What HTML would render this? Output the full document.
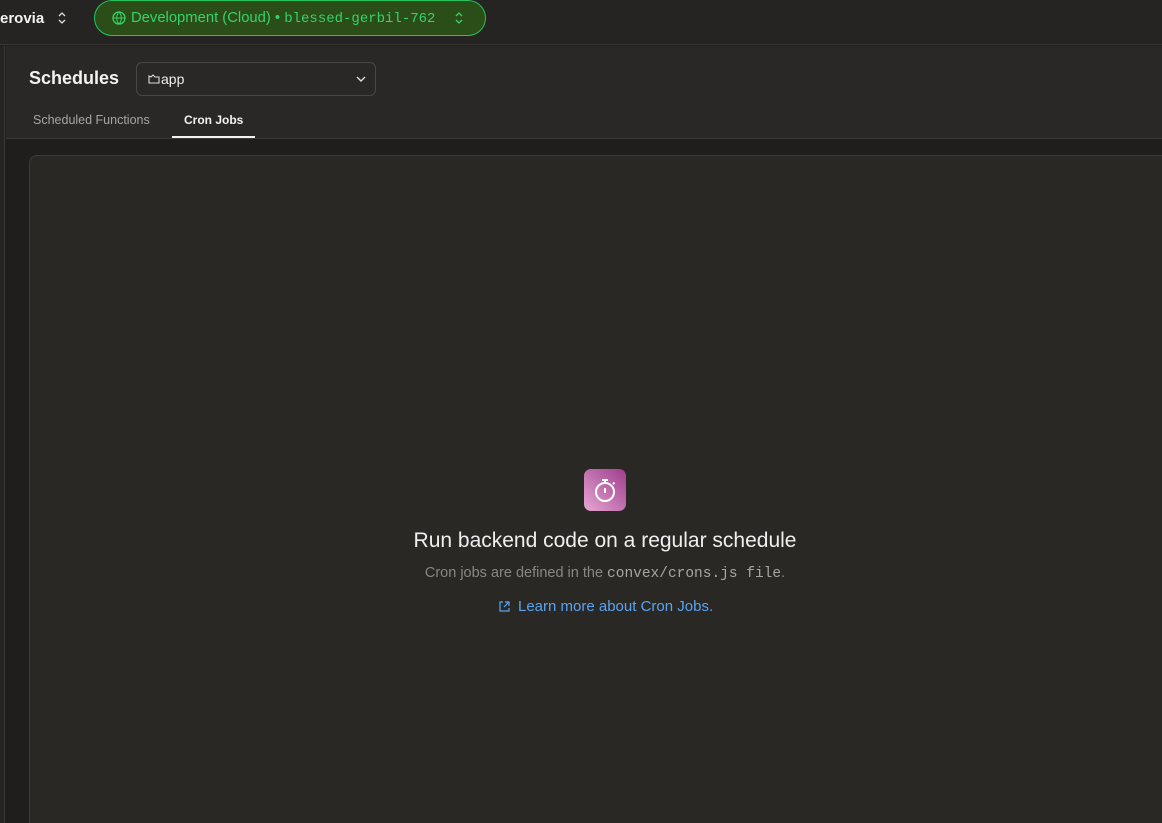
<!DOCTYPE html><html><head><style>
*{box-sizing:border-box;margin:0;padding:0}
html,body{width:1162px;height:823px;overflow:hidden}
body{background:#1f1e1c;font-family:"Liberation Sans",sans-serif;color:#eee;position:relative}
.top{position:absolute;left:0;top:0;width:1162px;height:45px;background:#252422;border-bottom:1px solid #3a3834}
.side{position:absolute;left:0;top:46px;width:5px;height:777px;background:#252422;border-right:1px solid #3a3834}
.head{position:absolute;left:6px;top:46px;right:0;height:93px;background:#2a2826;border-bottom:1px solid #3c3a36}
.card{position:absolute;left:29px;top:155px;width:1150px;height:700px;background:#2a2825;border:1px solid #3c3a36;border-radius:8px}
</style></head><body>
<div class="top">
<div style="position:absolute;left:0;top:10px;font-size:15px;font-weight:bold;color:#f2f2f2">erovia</div>
<svg style="position:absolute;left:57px;top:11px" width="10" height="14"><path d="M2 5l3-3 3 3M2 9l3 3 3-3" stroke="#ddd" stroke-width="1.3" fill="none"/></svg>
<div style="position:absolute;left:94px;top:0;width:392px;height:36px;border:1px solid #22c55e;border-radius:18px;background:#2b4d17;color:#35d46a;font-size:14.8px;line-height:34px;padding-left:36px;white-space:nowrap">Development (Cloud) • <span style="font-family:'Liberation Mono',monospace;font-size:14px">blessed-gerbil-762</span></div>
<svg style="position:absolute;left:112px;top:11px" width="14" height="14"><circle cx="7" cy="7" r="6" stroke="#35d46a" fill="none" stroke-width="1.3"/><path d="M1 7h12M7 1c-3 3-3 9 0 12M7 1c3 3 3 9 0 12" stroke="#35d46a" fill="none" stroke-width="1"/></svg>
<svg style="position:absolute;left:454px;top:11px" width="10" height="14"><path d="M2 5l3-3 3 3M2 9l3 3 3-3" stroke="#35d46a" stroke-width="1.3" fill="none"/></svg>
</div>
<div class="side"></div>
<div class="head">
<div style="position:absolute;left:23px;top:22px;font-size:18px;font-weight:bold;color:#f2f2f2">Schedules</div>
<div style="position:absolute;left:130px;top:16px;width:240px;height:34px;border:1px solid #4a4743;border-radius:6px;font-size:14px;line-height:32px;padding-left:24px;color:#eee">app</div>
<svg style="position:absolute;left:142px;top:27px" width="13" height="12"><path d="M1 3v7h10V4H7L5 2 3 4z" stroke="#ddd" fill="none" stroke-width="1.1"/></svg>
<svg style="position:absolute;left:349px;top:28px" width="12" height="10"><path d="M2 3l4 4 4-4" stroke="#ddd" stroke-width="1.4" fill="none"/></svg>
<div style="position:absolute;left:27px;top:67px;font-size:12.5px;color:#a8a5a0">Scheduled Functions</div>
<div style="position:absolute;left:178px;top:67px;font-size:12px;font-weight:bold;color:#f2f2f2">Cron Jobs</div>
<div style="position:absolute;left:166px;top:90px;width:83px;height:2px;background:#f2f2f2"></div>
</div>
<div class="card"></div>
<div style="position:absolute;left:584px;top:469px;width:42px;height:42px;border-radius:7px;background:linear-gradient(45deg,#e6a6d3,#9e3d8c)"></div>
<svg style="position:absolute;left:584px;top:469px" width="42" height="42"><circle cx="21" cy="23" r="9" stroke="#fff" stroke-width="2" fill="none"/><path d="M18 11h6M21 11v3M21 19v5M29 15l1.5-1.5" stroke="#fff" stroke-width="2" fill="none"/></svg>
<div style="position:absolute;left:0;width:1210px;top:529px;text-align:center;font-size:21px;color:#efefef">Run backend code on a regular schedule</div>
<div style="position:absolute;left:0;width:1210px;top:565px;text-align:center;font-size:14.5px;color:#8a8782">Cron jobs are defined in the <span style="font-family:'Liberation Mono',monospace;color:#a8a5a0">convex/crons.js file</span>.</div>
<svg style="position:absolute;left:498px;top:600px" width="13" height="13"><path d="M5 2H2v9h9V8M7 2h4v4M11 2L6 7" stroke="#5aa3f0" stroke-width="1.2" fill="none"/></svg>
<div style="position:absolute;left:518px;top:598px;font-size:15px;color:#5aa3f0">Learn more about Cron Jobs.</div>
</body></html>
